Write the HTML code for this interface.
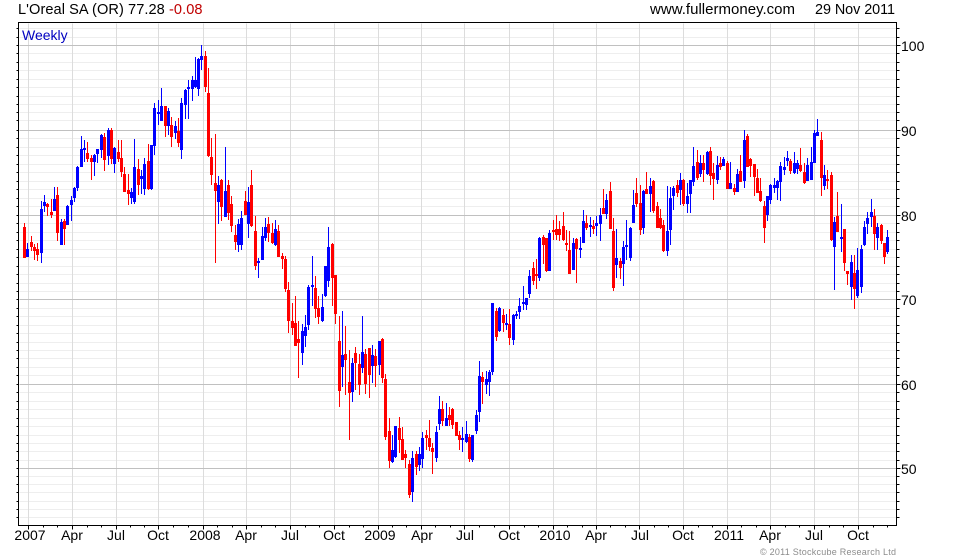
<!DOCTYPE html>
<html><head><meta charset="utf-8"><style>
html,body{margin:0;padding:0;background:#fff;width:980px;height:560px;overflow:hidden}
svg{display:block;position:absolute;left:0;top:0}
text{font-family:"Liberation Sans",sans-serif;font-size:14px;fill:#000}
</style></head><body>
<svg width="980" height="560" viewBox="0 0 980 560" xmlns="http://www.w3.org/2000/svg">
<g shape-rendering="crispEdges" fill="none" transform="translate(0.5,0.5)">
<path stroke="#eeeeee" d="M19 28H896M19 37H896M19 53H896M19 62H896M19 70H896M19 79H896M19 87H896M19 96H896M19 104H896M19 112H896M19 120H896M19 138H896M19 147H896M19 155H896M19 164H896M19 172H896M19 181H896M19 189H896M19 198H896M19 206H896M19 223H896M19 232H896M19 240H896M19 249H896M19 257H896M19 266H896M19 274H896M19 283H896M19 291H896M19 308H896M19 316H896M19 325H896M19 333H896M19 342H896M19 350H896M19 358H896M19 367H896M19 375H896M19 392H896M19 401H896M19 409H896M19 418H896M19 426H896M19 435H896M19 443H896M19 451H896M19 460H896M19 476H896M19 484H896M19 492H896M19 501H896M19 509H896M19 517H896"/>
<path stroke="#dcdcdc" d="M28 23V525M72 23V525M116 23V525M158 23V525M203 23V525M246 23V525M290 23V525M334 23V525M378 23V525M421 23V525M464 23V525M509 23V525M553 23V525M596 23V525M639 23V525M683 23V525M727 23V525M770 23V525M814 23V525M858 23V525"/>
<path stroke="#c0c0c0" d="M19 45H896M19 130H896M19 215H896M19 299H896M19 384H896M19 468H896"/>
<path stroke="#000" d="M18 22H896V525H18ZM16 28H18M16 37H18M16 45H18M16 53H18M16 62H18M16 70H18M16 79H18M16 87H18M16 96H18M16 104H18M16 112H18M16 120H18M16 130H18M16 138H18M16 147H18M16 155H18M16 164H18M16 172H18M16 181H18M16 189H18M16 198H18M16 206H18M16 215H18M16 223H18M16 232H18M16 240H18M16 249H18M16 257H18M16 266H18M16 274H18M16 283H18M16 291H18M16 299H18M16 308H18M16 316H18M16 325H18M16 333H18M16 342H18M16 350H18M16 358H18M16 367H18M16 375H18M16 384H18M16 392H18M16 401H18M16 409H18M16 418H18M16 426H18M16 435H18M16 443H18M16 451H18M16 460H18M16 468H18M16 476H18M16 484H18M16 492H18M16 501H18M16 509H18M16 517H18"/>
<path stroke="#000" d="M896 28H899M896 37H899M896 45H900M896 53H899M896 62H899M896 70H899M896 79H899M896 87H899M896 96H899M896 104H899M896 112H899M896 120H899M896 130H900M896 138H899M896 147H899M896 155H899M896 164H899M896 172H899M896 181H899M896 189H899M896 198H899M896 206H899M896 215H900M896 223H899M896 232H899M896 240H899M896 249H899M896 257H899M896 266H899M896 274H899M896 283H899M896 291H899M896 299H900M896 308H899M896 316H899M896 325H899M896 333H899M896 342H899M896 350H899M896 358H899M896 367H899M896 375H899M896 384H900M896 392H899M896 401H899M896 409H899M896 418H899M896 426H899M896 435H899M896 443H899M896 451H899M896 460H899M896 468H900M896 476H899M896 484H899M896 492H899M896 501H899M896 509H899M896 517H899"/>
<path stroke="#000" d="M28 525V529M72 525V529M116 525V529M158 525V529M203 525V529M246 525V529M290 525V529M334 525V529M378 525V529M421 525V529M464 525V529M509 525V529M553 525V529M596 525V529M639 525V529M683 525V529M727 525V529M770 525V529M814 525V529M858 525V529M43 525V527M57 525V527M87 525V527M101 525V527M130 525V527M144 525V527M173 525V527M188 525V527M217 525V527M232 525V527M261 525V527M275 525V527M305 525V527M319 525V527M349 525V527M363 525V527M392 525V527M406 525V527M435 525V527M450 525V527M479 525V527M494 525V527M524 525V527M538 525V527M567 525V527M582 525V527M610 525V527M625 525V527M654 525V527M668 525V527M698 525V527M712 525V527M741 525V527M756 525V527M785 525V527M799 525V527M829 525V527M843 525V527M873 525V527M887 525V527"/>
</g>
<g shape-rendering="crispEdges" fill="none" transform="translate(0.5,0)">
<path stroke="#0000ff" stroke-width="1" d="M27 243V257M41 201V263M44 195V212M54 187V211M61 219V245M67 205V225M71 196V221M74 187V202M77 166V191M81 136V167M84 140V162M94 154V176M97 149V163M101 134V158M108 128V165M114 147V173M131 188V204M134 139V204M141 170V194M144 158V195M151 145V190M154 103V155M158 100V125M161 88V121M168 108V135M175 121V139M181 98V159M185 89V119M188 80V119M192 76V101M195 57V88M198 58V96M201 45V70M218 176V224M225 147V217M238 219V252M241 211V250M248 187V238M258 258V278M262 227V260M265 218V241M275 220V246M302 324V365M305 315V347M308 285V330M312 256V306M322 294V322M325 266V297M328 227V287M342 311V387M352 358V402M362 316V373M372 345V383M379 341V375M392 435V463M395 426V458M412 451V502M419 447V471M422 432V468M436 426V462M439 396V430M446 403V426M462 427V452M466 421V443M472 435V462M476 410V434M479 361V422M486 371V394M489 370V396M492 303V375M499 307V332M506 314V330M513 314V345M516 311V319M519 298V319M523 286V310M526 298V310M529 270V298M539 237V281M549 230V271M573 238V270M580 237V258M583 210V243M590 217V237M596 216V236M600 208V241M606 194V219M616 229V278M623 241V286M626 220V260M630 227V261M633 190V223M643 190V234M650 178V212M667 186V256M670 187V245M673 186V210M680 173V205M687 183V213M690 180V213M693 147V186M700 155V177M707 151V175M717 156V184M723 157V166M730 162V189M737 169V192M744 130V188M767 196V221M770 184V204M774 178V193M777 180V200M780 162V201M784 157V175M787 151V166M794 152V174M797 160V174M807 158V181M811 147V180M814 130V163M817 119V136M824 165V190M834 217V290M841 204V252M851 255V300M857 248V298M861 245V293M864 221V246M867 212V234M871 199V227M877 223V250M887 230V254"/>
<path stroke="#0000ff" stroke-width="3" d="M27 249V257M41 209V253M44 202V206M54 199V211M61 222V245M67 206V225M71 200V205M74 188V198M77 167V188M81 149V167M84 148V150M94 155V162M97 149V154M101 135V150M108 130V156M114 148V164M131 192V198M134 167V202M141 176V179M144 164V189M151 145V189M154 108V146M158 112V114M161 106V121M168 111V126M175 126V133M181 103V150M185 90V105M188 87V89M192 80V89M195 80V87M198 59V89M201 56V60M218 185V202M225 191V217M238 224V245M241 218V245M248 202V224M258 261V263M262 236V260M265 227V238M275 229V245M302 331V353M305 327V336M308 287V325M312 285V287M322 307V321M325 266V296M328 247V281M342 355V367M352 363V392M362 352V368M372 355V366M379 341V365M392 450V462M395 426V457M412 458V492M419 454V465M422 438V459M436 432V458M439 409V424M446 418V426M462 438V440M466 434V442M472 435V460M476 415V431M479 376V412M486 379V385M489 372V382M492 303V372M499 308V331M506 323V325M513 315V340M516 314V316M519 306V312M523 302V304M526 298V305M529 276V294M539 238V278M549 233V271M573 243V270M580 248V250M583 221V243M590 225V227M596 223V226M600 215V224M606 200V214M616 258V265M623 247V264M626 245V247M630 228V258M633 205V223M643 191V228M650 186V194M667 231V251M670 198V230M673 188V196M680 180V190M687 196V204M690 180V194M693 166V182M700 163V174M707 152V174M717 165V180M723 159V166M730 183V189M737 174V192M744 140V181M767 196V215M770 185V200M774 185V188M777 181V188M780 166V182M784 167V170M787 158V161M794 163V173M797 163V169M807 165V181M811 162V180M814 133V163M817 132V136M824 175V186M834 222V247M841 237V239M851 262V287M857 270V296M861 249V287M864 227V245M867 218V224M871 212V217M877 227V238M887 237V252"/>
<path stroke="#ff0000" stroke-width="1" d="M24 223V258M31 236V251M34 244V260M37 243V261M47 203V216M51 199V218M57 187V241M64 219V245M87 142V162M91 155V180M104 133V171M111 128V164M118 140V162M121 140V177M124 167V192M128 174V205M138 159V195M148 144V190M165 106V137M171 117V147M178 118V147M205 51V92M208 68V157M211 138V185M215 134V263M221 179V221M228 180V220M231 196V232M235 225V250M245 191V215M251 170V227M255 216V270M268 217V242M272 223V244M278 225V257M282 253V269M285 256V292M288 282V333M292 303V335M295 296V346M298 321V378M315 276V318M318 296V324M332 243V306M335 275V324M339 316V407M345 326V395M349 350V440M355 347V390M359 354V395M365 349V394M369 348V398M375 349V387M382 338V383M385 374V440M389 418V468M399 417V453M402 427V460M405 450V468M409 460V498M416 451V475M426 430V450M429 420V451M432 443V474M442 401V426M449 407V426M452 408V429M456 422V436M459 431V450M469 434V462M482 372V404M496 308V341M503 309V332M509 309V345M533 262V285M536 259V289M543 235V264M546 238V272M553 220V240M556 215V240M559 221V241M563 212V241M566 230V251M569 231V274M576 238V283M586 215V230M593 220V234M603 189V214M610 182V229M613 218V291M620 258V279M636 178V207M640 185V235M646 172V194M653 180V213M657 202V228M660 209V229M663 220V252M677 180V197M683 179V206M697 150V180M703 155V182M710 147V185M713 163V200M720 157V170M727 161V189M734 184V195M740 155V182M747 134V167M750 158V177M754 164V196M757 169V193M760 178V202M764 201V243M790 159V174M800 148V172M804 163V184M821 132V196M827 170V189M831 172V241M837 192V232M844 229V271M847 271V285M854 255V309M874 209V250M881 224V244M884 243V264"/>
<path stroke="#ff0000" stroke-width="3" d="M24 227V258M31 242V247M34 247V251M37 249V255M47 204V207M51 212V215M57 195V233M64 221V229M87 153V159M91 158V162M104 137V160M111 130V159M118 152V159M121 158V172M124 174V192M128 190V194M138 169V185M148 161V189M165 106V126M171 125V137M178 131V143M205 56V87M208 93V156M211 157V175M215 183V191M221 180V207M228 185V213M231 204V226M235 235V242M245 201V215M251 185V226M255 231V266M268 224V233M272 233V243M278 231V257M282 256V259M285 259V289M288 290V321M292 321V328M295 323V346M298 339V343M315 288V309M318 308V317M332 244V278M335 275V314M339 341V391M345 354V360M349 382V393M355 353V363M359 364V385M365 354V384M369 348V375M375 356V366M382 339V378M385 379V437M389 431V461M399 428V440M402 439V460M405 454V458M409 464V495M416 454V467M426 435V438M429 438V447M432 448V452M442 409V421M449 415V420M452 409V425M456 422V436M459 435V440M469 437V459M482 377V382M496 311V337M503 315V323M509 324V338M533 268V281M536 274V276M543 237V245M546 238V271M553 230V232M556 229V235M559 229V235M563 226V240M566 243V245M569 250V274M576 239V249M586 223V228M593 226V229M603 208V214M610 191V229M613 231V288M620 261V268M636 193V204M640 203V230M646 189V194M653 181V211M657 206V228M660 218V228M663 225V251M677 185V193M683 180V204M697 162V178M703 163V170M710 151V176M713 173V179M720 163V167M727 163V189M734 188V192M740 171V182M747 136V167M750 159V166M754 164V177M757 178V193M760 191V201M764 206V228M790 161V171M800 165V171M804 172V183M821 140V178M827 179V181M831 175V240M837 216V232M844 229V263M847 271V274M854 273V289M874 216V234M881 225V241M884 243V257"/>
</g>
<text x="18" y="14" textLength="184.5" style="font-size:14.6px">L'Oreal SA (OR) 77.28 <tspan fill="#c00000">-0.08</tspan></text>
<text x="650" y="14" textLength="145" style="font-size:15px">www.fullermoney.com</text>
<text x="815" y="14" textLength="80" style="font-size:14.4px">29 Nov 2011</text>
<text x="22" y="40" style="fill:#0000c0">Weekly</text>
<text x="901" y="51">100</text>
<text x="901" y="136">90</text>
<text x="901" y="221">80</text>
<text x="901" y="305">70</text>
<text x="901" y="390">60</text>
<text x="901" y="474">50</text>
<g text-anchor="middle">
<text x="30" y="540">2007</text><text x="72" y="540">Apr</text><text x="116" y="540">Jul</text><text x="158" y="540">Oct</text>
<text x="205" y="540">2008</text><text x="246" y="540">Apr</text><text x="290" y="540">Jul</text><text x="334" y="540">Oct</text>
<text x="380" y="540">2009</text><text x="422" y="540">Apr</text><text x="465" y="540">Jul</text><text x="509" y="540">Oct</text>
<text x="555" y="540">2010</text><text x="596" y="540">Apr</text><text x="640" y="540">Jul</text><text x="683" y="540">Oct</text>
<text x="729" y="540">2011</text><text x="770" y="540">Apr</text><text x="814" y="540">Jul</text><text x="858" y="540">Oct</text>
</g>
<text x="760" y="555" textLength="136" style="font-size:9px;fill:#8c8c8c">© 2011 Stockcube Research Ltd</text>
</svg>
</body></html>
